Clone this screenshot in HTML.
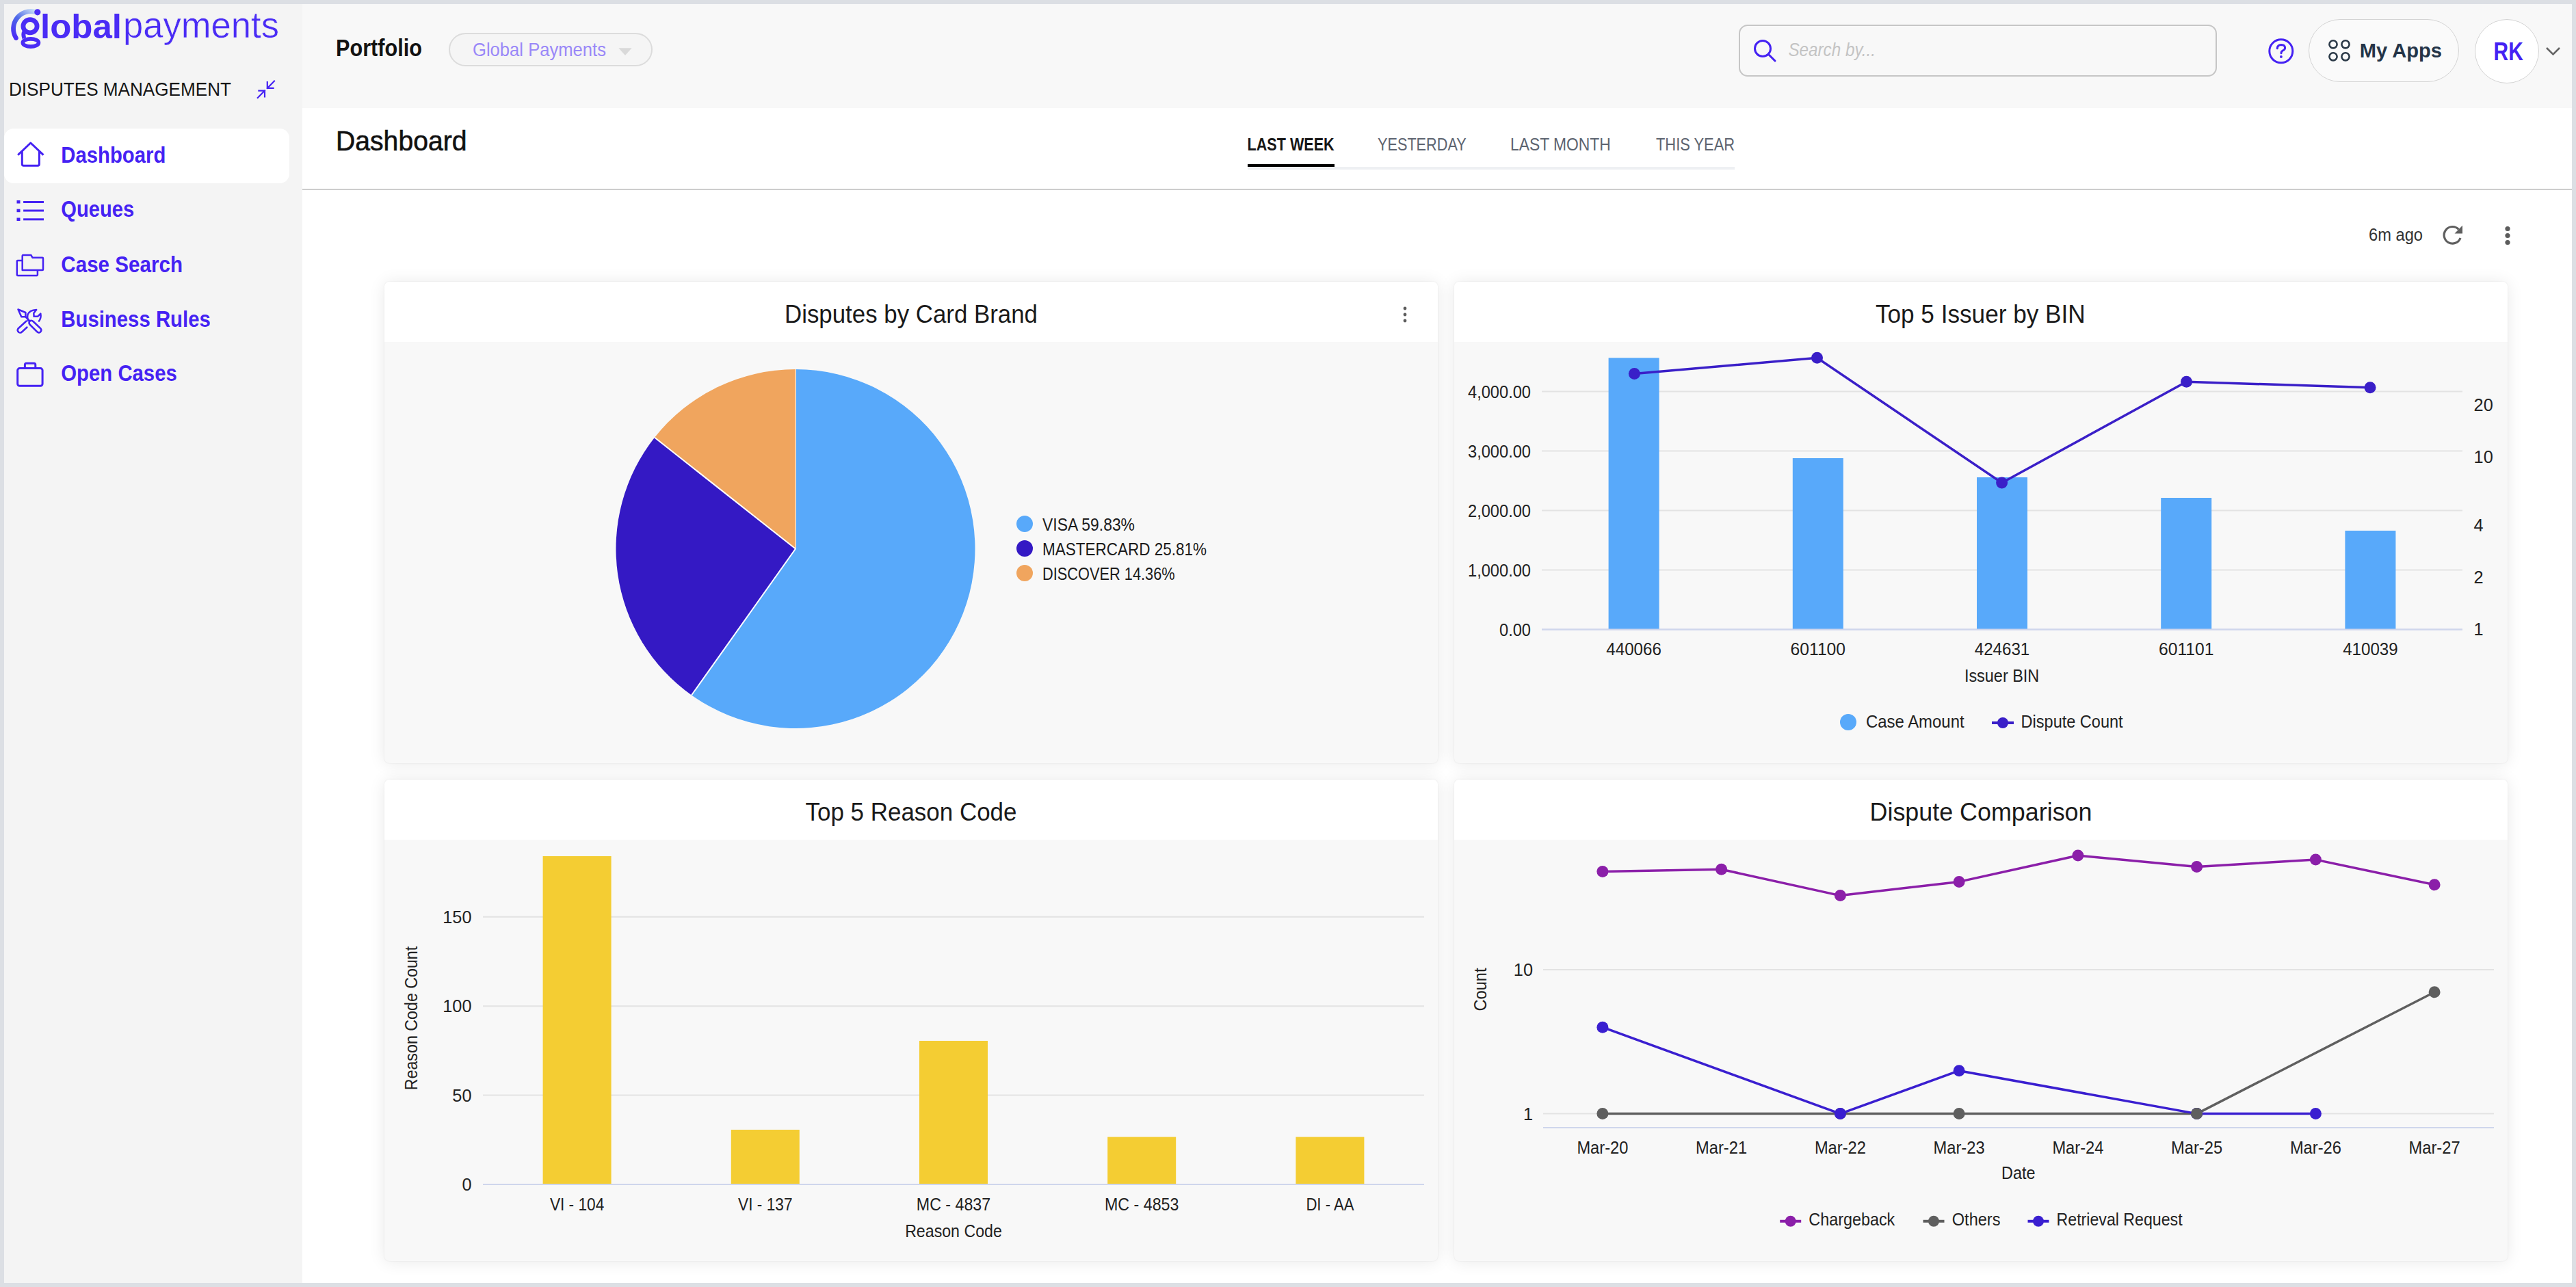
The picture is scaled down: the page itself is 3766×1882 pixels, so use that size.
<!DOCTYPE html>
<html><head><meta charset="utf-8"><style>
html,body{margin:0;padding:0;}
body{width:3766px;height:1882px;overflow:hidden;background:#dcdfe4;position:relative;font-family:"Liberation Sans", sans-serif;}
svg text{font-family:"Liberation Sans", sans-serif;}
</style></head><body>
<div style="position:absolute;left:6px;top:6px;width:436px;height:1870px;background:#f4f4f4"></div><div style="position:absolute;left:442px;top:6px;width:3318px;height:152px;background:#f8f8f8"></div><div style="position:absolute;left:442px;top:158px;width:3318px;height:1718px;background:#ffffff"></div><div style="position:absolute;left:442px;top:276px;width:3318px;height:2px;background:#cdcdcd"></div><div style="position:absolute;left:6px;top:188px;width:417px;height:80px;background:#ffffff;border-radius:14px"></div><div style="position:absolute;left:656px;top:48px;width:298px;height:49px;box-sizing:border-box;border:2px solid #dcdcdc;border-radius:25px;background:#f5f5f5"></div><div style="position:absolute;left:2542px;top:36px;width:699px;height:76px;box-sizing:border-box;border:2px solid #c6c6c6;border-radius:13px;background:#f8f8f8"></div><div style="position:absolute;left:3375px;top:28px;width:220px;height:92px;box-sizing:border-box;border:1.6px solid #d4d4d4;border-radius:46px;background:#fafafa"></div><div style="position:absolute;left:3618px;top:28px;width:94px;height:94px;box-sizing:border-box;border:1.6px solid #d4d4d4;border-radius:50%;background:#ffffff"></div><div style="position:absolute;left:1824px;top:244px;width:712px;height:4px;background:#eef0f3"></div><div style="position:absolute;left:1824px;top:240px;width:127px;height:4px;background:#000000"></div><div style="position:absolute;left:562px;top:412px;width:1540px;height:704px;background:#f8f8f8;border-radius:7px;box-shadow:0 0 2px rgba(0,0,0,0.09),0 1px 24px rgba(0,0,0,0.09);overflow:hidden"></div><div style="position:absolute;left:562px;top:412px;width:1540px;height:88px;background:#ffffff;border-radius:7px 7px 0 0"></div><div style="position:absolute;left:2126px;top:412px;width:1540px;height:704px;background:#f8f8f8;border-radius:7px;box-shadow:0 0 2px rgba(0,0,0,0.09),0 1px 24px rgba(0,0,0,0.09);overflow:hidden"></div><div style="position:absolute;left:2126px;top:412px;width:1540px;height:88px;background:#ffffff;border-radius:7px 7px 0 0"></div><div style="position:absolute;left:562px;top:1140px;width:1540px;height:704px;background:#f8f8f8;border-radius:7px;box-shadow:0 0 2px rgba(0,0,0,0.09),0 1px 24px rgba(0,0,0,0.09);overflow:hidden"></div><div style="position:absolute;left:562px;top:1140px;width:1540px;height:88px;background:#ffffff;border-radius:7px 7px 0 0"></div><div style="position:absolute;left:2126px;top:1140px;width:1540px;height:704px;background:#f8f8f8;border-radius:7px;box-shadow:0 0 2px rgba(0,0,0,0.09),0 1px 24px rgba(0,0,0,0.09);overflow:hidden"></div><div style="position:absolute;left:2126px;top:1140px;width:1540px;height:88px;background:#ffffff;border-radius:7px 7px 0 0"></div>
<svg width="3766" height="1882" viewBox="0 0 3766 1882" style="position:absolute;left:0;top:0">
<defs><linearGradient id="lg" gradientUnits="userSpaceOnUse" x1="22" y1="55" x2="52" y2="14"><stop offset="0" stop-color="#4a2cf5"/><stop offset="0.5" stop-color="#4f6ae8"/><stop offset="1" stop-color="#cfe6f6"/></linearGradient></defs><path d="M23.4,55.5 A25.5,25.5 0 0 1 51.6,17.4" stroke="url(#lg)" stroke-width="6.8" fill="none" stroke-linecap="round"/><circle cx="54.8" cy="17.8" r="4.6" fill="#4a2cf5"/><ellipse cx="44" cy="38.3" rx="10.1" ry="9.6" stroke="#4a2cf5" stroke-width="6.8" fill="none"/><path d="M36,45.5 Q33,50 35.5,56" stroke="#4a2cf5" stroke-width="6" fill="none"/><ellipse cx="44.9" cy="62.5" rx="11.6" ry="5.6" stroke="#4a2cf5" stroke-width="5.6" fill="none"/><text x="59" y="55.6" font-size="50" font-weight="700" fill="#4a2cf5" textLength="119" lengthAdjust="spacingAndGlyphs">lobal</text><text x="180" y="55.4" font-size="53" font-weight="400" fill="#4a2cf5" textLength="228" lengthAdjust="spacingAndGlyphs" stroke="#f4f4f4" stroke-width="0.5">payments</text>
<g stroke="#4522f3" stroke-width="2.2" fill="none" stroke-linecap="square"><path d="M401,118.6 L390.8,128.9 M390.8,120 L390.8,128.9 L399.6,128.9"/><path d="M376.8,142.9 L387,132.6 M378.4,132.6 L387,132.6 L387,141.3"/></g><g stroke="#4522f3" stroke-width="3" fill="none" stroke-linejoin="round"><path d="M26.2,226.7 L44.8,209 L63.5,226.7"/><path d="M32.3,221 L32.3,240 Q32.3,242.2 34.5,242.2 L55.2,242.2 Q57.4,242.2 57.4,240 L57.4,221"/></g><g fill="#4522f3"><rect x="24.5" y="293" width="5" height="4.5"/><rect x="24.5" y="305.7" width="5" height="4.5"/><rect x="24.5" y="318.5" width="5" height="4.5"/><rect x="34.1" y="294" width="29.9" height="3"/><rect x="34.1" y="306.5" width="29.9" height="3"/><rect x="34.1" y="319.3" width="29.9" height="3"/></g><g stroke="#4522f3" stroke-width="2.5" fill="none" stroke-linejoin="round"><path d="M32.7,395 L32.7,374 Q32.7,373 34,373 L45.3,373 L47.6,376.8 L62,376.8 Q63,376.8 63,378 L63,394 Q63,395 62,395 Z"/><path d="M32.7,381 L25.8,381 Q24.8,381 24.8,382 L24.8,402 Q24.8,402.9 25.8,402.9 L54,402.9 Q54.9,402.9 54.9,402 L54.9,395"/></g><g stroke="#4522f3" stroke-width="2.5" fill="none" stroke-linejoin="round" stroke-linecap="round"><path d="M26.5,452.5 L37.4,457 L37.4,463.3 L31.3,463.3 Z"/><path d="M37.4,463.3 L43.5,469.5"/><path d="M43.5,469.5 Q46,467.8 48.5,470 L59.5,480.5 Q61.5,483 59,485.5 Q56.5,487.5 54,485 L43.5,474.5 Q41.5,472 43.5,469.5 Z"/><path d="M38.5,469.5 L26.5,480.5 Q24.5,483.5 27.5,486 Q30,487.5 32.5,485 L39.5,478.5"/><path d="M41,469 Q39.5,464 40.5,460 Q43,453.5 53.2,453 L49.3,458 L49.6,462.8 L55,462.8 L59.3,458.6 Q60.5,465 57,469.5"/></g><g stroke="#4522f3" stroke-width="3" fill="none" stroke-linejoin="round"><rect x="25.7" y="538.6" width="36.4" height="25.7" rx="3"/><path d="M36.4,538.6 L36.4,533.5 Q36.4,531.3 38.6,531.3 L49.6,531.3 Q51.8,531.3 51.8,533.5 L51.8,538.6"/></g><g stroke="#4522f3" stroke-width="3" fill="none" stroke-linecap="round"><circle cx="2577" cy="71" r="11.5"/><path d="M2585.5,79.5 L2595,89"/></g><g stroke="#4522f3" stroke-width="3" fill="none" stroke-linecap="round"><circle cx="3334.8" cy="74.8" r="17"/><path d="M3329.3,70.8 Q3329.6,65.6 3335,65.6 Q3340.6,65.8 3340.6,70 Q3340.6,72.6 3337.5,73.9 Q3335,75 3335,77.8"/></g><circle cx="3334.9" cy="83" r="1.9" fill="#4522f3"/><circle cx="3411" cy="64.8" r="5.6" stroke="#2c3a48" stroke-width="2.6" fill="none"/><circle cx="3429" cy="64.8" r="5.6" stroke="#2c3a48" stroke-width="2.6" fill="none"/><circle cx="3411" cy="82.8" r="5.6" stroke="#2c3a48" stroke-width="2.6" fill="none"/><circle cx="3429" cy="82.8" r="5.6" stroke="#2c3a48" stroke-width="2.6" fill="none"/><path d="M3723,70 L3732.5,79.5 L3742,70" stroke="#666" stroke-width="2.6" fill="none"/><path d="M904.4,70.3 L923.6,70.3 L914,80.9 Z" fill="#d9d9d9"/><g stroke="#5f5f5f" stroke-width="3.2" fill="none"><path d="M3597,348 A12.3,12.3 0 1 1 3594.5,335.5"/></g><path d="M3600,329.7 L3600,341.5 L3588.5,341.5 Z" fill="#5f5f5f"/><circle cx="3666" cy="334.5" r="3.6" fill="#5c5c5c"/><circle cx="3666" cy="344.5" r="3.6" fill="#5c5c5c"/><circle cx="3666" cy="354.5" r="3.6" fill="#5c5c5c"/><circle cx="2054" cy="451" r="2.4" fill="#5c5c5c"/><circle cx="2054" cy="460" r="2.4" fill="#5c5c5c"/><circle cx="2054" cy="469" r="2.4" fill="#5c5c5c"/>
<text x="13" y="140" font-size="28.3" font-weight="400" font-style="normal" fill="#151515" text-anchor="start" textLength="325" lengthAdjust="spacingAndGlyphs" >DISPUTES MANAGEMENT</text><text x="89.3" y="238" font-size="33.9" font-weight="700" font-style="normal" fill="#4522f3" text-anchor="start" textLength="153" lengthAdjust="spacingAndGlyphs" >Dashboard</text><text x="89.3" y="317" font-size="33.9" font-weight="700" font-style="normal" fill="#4522f3" text-anchor="start" textLength="107" lengthAdjust="spacingAndGlyphs" >Queues</text><text x="89.3" y="398" font-size="33.9" font-weight="700" font-style="normal" fill="#4522f3" text-anchor="start" textLength="177.7" lengthAdjust="spacingAndGlyphs" >Case Search</text><text x="89.3" y="478" font-size="33.9" font-weight="700" font-style="normal" fill="#4522f3" text-anchor="start" textLength="218.5" lengthAdjust="spacingAndGlyphs" >Business Rules</text><text x="89.3" y="557" font-size="33.9" font-weight="700" font-style="normal" fill="#4522f3" text-anchor="start" textLength="169.5" lengthAdjust="spacingAndGlyphs" >Open Cases</text><text x="491" y="82" font-size="34.9" font-weight="700" font-style="normal" fill="#121212" text-anchor="start" textLength="126" lengthAdjust="spacingAndGlyphs" >Portfolio</text><text x="691" y="82" font-size="28.3" font-weight="400" font-style="normal" fill="#9a88f8" text-anchor="start" textLength="195" lengthAdjust="spacingAndGlyphs" >Global Payments</text><text x="2614.4" y="81.8" font-size="28" font-weight="400" font-style="italic" fill="#c4c4c4" text-anchor="start" textLength="127.6" lengthAdjust="spacingAndGlyphs" >Search by...</text><text x="3449.7" y="84" font-size="29" font-weight="700" font-style="normal" fill="#243447" text-anchor="start" textLength="120.3" lengthAdjust="spacingAndGlyphs" >My Apps</text><text x="3645.6" y="88.3" font-size="37.8" font-weight="700" font-style="normal" fill="#4522f3" text-anchor="start" textLength="43.2" lengthAdjust="spacingAndGlyphs" >RK</text><text x="491" y="219.6" font-size="41.4" font-weight="400" font-style="normal" fill="#111111" text-anchor="start" textLength="191.5" lengthAdjust="spacingAndGlyphs" stroke="#111111" stroke-width="0.6">Dashboard</text><text x="1823.6" y="220" font-size="26.2" font-weight="700" font-style="normal" fill="#161616" text-anchor="start" textLength="127" lengthAdjust="spacingAndGlyphs" >LAST WEEK</text><text x="2014" y="220" font-size="26.2" font-weight="400" font-style="normal" fill="#5d6470" text-anchor="start" textLength="129.7" lengthAdjust="spacingAndGlyphs" >YESTERDAY</text><text x="2208" y="220" font-size="26.2" font-weight="400" font-style="normal" fill="#5d6470" text-anchor="start" textLength="146.7" lengthAdjust="spacingAndGlyphs" >LAST MONTH</text><text x="2421" y="220" font-size="26.2" font-weight="400" font-style="normal" fill="#5d6470" text-anchor="start" textLength="115" lengthAdjust="spacingAndGlyphs" >THIS YEAR</text><text x="3463" y="351.8" font-size="25.4" font-weight="400" font-style="normal" fill="#333333" text-anchor="start" textLength="79" lengthAdjust="spacingAndGlyphs" >6m ago</text><text x="1332" y="471.6" font-size="37.8" font-weight="400" font-style="normal" fill="#1a1a1a" text-anchor="middle" textLength="370" lengthAdjust="spacingAndGlyphs" >Disputes by Card Brand</text><text x="2895.3" y="471.6" font-size="37.8" font-weight="400" font-style="normal" fill="#1a1a1a" text-anchor="middle" textLength="306.7" lengthAdjust="spacingAndGlyphs" >Top 5 Issuer by BIN</text><text x="1332" y="1199.6" font-size="37.8" font-weight="400" font-style="normal" fill="#1a1a1a" text-anchor="middle" textLength="309" lengthAdjust="spacingAndGlyphs" >Top 5 Reason Code</text><text x="2896" y="1199.6" font-size="37.8" font-weight="400" font-style="normal" fill="#1a1a1a" text-anchor="middle" textLength="325" lengthAdjust="spacingAndGlyphs" >Dispute Comparison</text><path d="M1163,802.5 L1163.00,540.00 A262.5,262.5 0 1 1 1010.98,1016.50 Z" fill="#58a9fa"/><line x1="1163" y1="802.5" x2="1163.00" y2="540.00" stroke="#ffffff" stroke-width="2"/><path d="M1163,802.5 L1010.98,1016.50 A262.5,262.5 0 0 1 957.01,639.79 Z" fill="#3419c4"/><line x1="1163" y1="802.5" x2="1010.98" y2="1016.50" stroke="#ffffff" stroke-width="2"/><path d="M1163,802.5 L957.01,639.79 A262.5,262.5 0 0 1 1163.00,540.00 Z" fill="#f0a55e"/><line x1="1163" y1="802.5" x2="957.01" y2="639.79" stroke="#ffffff" stroke-width="2"/><circle cx="1498" cy="766" r="12" fill="#58a9fa"/><text x="1524" y="775.5" font-size="26" font-weight="400" font-style="normal" fill="#1c1c1c" text-anchor="start" textLength="135" lengthAdjust="spacingAndGlyphs" >VISA 59.83%</text><circle cx="1498" cy="802" r="12" fill="#3419c4"/><text x="1524" y="811.5" font-size="26" font-weight="400" font-style="normal" fill="#1c1c1c" text-anchor="start" textLength="240" lengthAdjust="spacingAndGlyphs" >MASTERCARD 25.81%</text><circle cx="1498" cy="838" r="12" fill="#f0a55e"/><text x="1524" y="847.5" font-size="26" font-weight="400" font-style="normal" fill="#1c1c1c" text-anchor="start" textLength="193.7" lengthAdjust="spacingAndGlyphs" >DISCOVER 14.36%</text><line x1="2254" y1="920.5" x2="3600" y2="920.5" stroke="#cfd6ec" stroke-width="2"/><text x="2238" y="929.5" font-size="25.3" font-weight="400" font-style="normal" fill="#222222" text-anchor="end" textLength="46" lengthAdjust="spacingAndGlyphs" >0.00</text><line x1="2254" y1="833.5" x2="3600" y2="833.5" stroke="#e3e3e3" stroke-width="2"/><text x="2238" y="842.5" font-size="25.3" font-weight="400" font-style="normal" fill="#222222" text-anchor="end" textLength="92" lengthAdjust="spacingAndGlyphs" >1,000.00</text><line x1="2254" y1="746.5" x2="3600" y2="746.5" stroke="#e3e3e3" stroke-width="2"/><text x="2238" y="755.5" font-size="25.3" font-weight="400" font-style="normal" fill="#222222" text-anchor="end" textLength="92" lengthAdjust="spacingAndGlyphs" >2,000.00</text><line x1="2254" y1="659.5" x2="3600" y2="659.5" stroke="#e3e3e3" stroke-width="2"/><text x="2238" y="668.5" font-size="25.3" font-weight="400" font-style="normal" fill="#222222" text-anchor="end" textLength="92" lengthAdjust="spacingAndGlyphs" >3,000.00</text><line x1="2254" y1="572.5" x2="3600" y2="572.5" stroke="#e3e3e3" stroke-width="2"/><text x="2238" y="581.5" font-size="25.3" font-weight="400" font-style="normal" fill="#222222" text-anchor="end" textLength="92" lengthAdjust="spacingAndGlyphs" >4,000.00</text><text x="3616.6" y="600.8" font-size="25.3" font-weight="400" font-style="normal" fill="#222222" text-anchor="start" >20</text><text x="3616.6" y="676.8" font-size="25.3" font-weight="400" font-style="normal" fill="#222222" text-anchor="start" >10</text><text x="3616.6" y="777" font-size="25.3" font-weight="400" font-style="normal" fill="#222222" text-anchor="start" >4</text><text x="3616.6" y="852.6" font-size="25.3" font-weight="400" font-style="normal" fill="#222222" text-anchor="start" >2</text><text x="3616.6" y="928.6" font-size="25.3" font-weight="400" font-style="normal" fill="#222222" text-anchor="start" >1</text><rect x="2351.6" y="523.3" width="74" height="397.2" fill="#58a9fa"/><text x="2388.6" y="957.7" font-size="25.3" font-weight="400" font-style="normal" fill="#222222" text-anchor="middle" textLength="80.5" lengthAdjust="spacingAndGlyphs" >440066</text><rect x="2620.8" y="670" width="74" height="250.5" fill="#58a9fa"/><text x="2657.8" y="957.7" font-size="25.3" font-weight="400" font-style="normal" fill="#222222" text-anchor="middle" textLength="80.5" lengthAdjust="spacingAndGlyphs" >601100</text><rect x="2890.0" y="698" width="74" height="222.5" fill="#58a9fa"/><text x="2927.0" y="957.7" font-size="25.3" font-weight="400" font-style="normal" fill="#222222" text-anchor="middle" textLength="80.5" lengthAdjust="spacingAndGlyphs" >424631</text><rect x="3159.2" y="728" width="74" height="192.5" fill="#58a9fa"/><text x="3196.2" y="957.7" font-size="25.3" font-weight="400" font-style="normal" fill="#222222" text-anchor="middle" textLength="80.5" lengthAdjust="spacingAndGlyphs" >601101</text><rect x="3428.4" y="776" width="74" height="144.5" fill="#58a9fa"/><text x="3465.4" y="957.7" font-size="25.3" font-weight="400" font-style="normal" fill="#222222" text-anchor="middle" textLength="80.5" lengthAdjust="spacingAndGlyphs" >410039</text><line x1="2254" y1="920.5" x2="3600" y2="920.5" stroke="#cfd6ec" stroke-width="2"/><polyline points="2389.4,546.6 2656.5,523.3 2926.6,706 3196.5,558.3 3465,566.7" fill="none" stroke="#3a1fc8" stroke-width="3.5"/><circle cx="2389.4" cy="546.6" r="8.5" fill="#3a1fc8"/><circle cx="2656.5" cy="523.3" r="8.5" fill="#3a1fc8"/><circle cx="2926.6" cy="706" r="8.5" fill="#3a1fc8"/><circle cx="3196.5" cy="558.3" r="8.5" fill="#3a1fc8"/><circle cx="3465" cy="566.7" r="8.5" fill="#3a1fc8"/><text x="2926.6" y="996.5" font-size="25.3" font-weight="400" font-style="normal" fill="#222222" text-anchor="middle" textLength="109.4" lengthAdjust="spacingAndGlyphs" >Issuer BIN</text><circle cx="2702" cy="1056" r="12" fill="#58a9fa"/><text x="2728" y="1064" font-size="25.3" font-weight="400" font-style="normal" fill="#222222" text-anchor="start" textLength="143.6" lengthAdjust="spacingAndGlyphs" >Case Amount</text><line x1="2912" y1="1057" x2="2944" y2="1057" stroke="#3a1fc8" stroke-width="4"/><circle cx="2928" cy="1057" r="8" fill="#3a1fc8"/><text x="2954.6" y="1064" font-size="25.3" font-weight="400" font-style="normal" fill="#222222" text-anchor="start" textLength="149" lengthAdjust="spacingAndGlyphs" >Dispute Count</text><line x1="706" y1="1732.0" x2="2082" y2="1732.0" stroke="#cfd6ec" stroke-width="2"/><text x="689.5" y="1741.0" font-size="25.3" font-weight="400" font-style="normal" fill="#222222" text-anchor="end" >0</text><line x1="706" y1="1601.6" x2="2082" y2="1601.6" stroke="#e3e3e3" stroke-width="2"/><text x="689.5" y="1610.6" font-size="25.3" font-weight="400" font-style="normal" fill="#222222" text-anchor="end" >50</text><line x1="706" y1="1471.2" x2="2082" y2="1471.2" stroke="#e3e3e3" stroke-width="2"/><text x="689.5" y="1480.2" font-size="25.3" font-weight="400" font-style="normal" fill="#222222" text-anchor="end" >100</text><line x1="706" y1="1340.8" x2="2082" y2="1340.8" stroke="#e3e3e3" stroke-width="2"/><text x="689.5" y="1349.8" font-size="25.3" font-weight="400" font-style="normal" fill="#222222" text-anchor="end" >150</text><rect x="793.6" y="1252" width="100" height="480.0" fill="#f4cd33"/><text x="843.6" y="1770" font-size="25.3" font-weight="400" font-style="normal" fill="#222222" text-anchor="middle" textLength="79.4" lengthAdjust="spacingAndGlyphs" >VI - 104</text><rect x="1068.8" y="1652" width="100" height="80.0" fill="#f4cd33"/><text x="1118.8" y="1770" font-size="25.3" font-weight="400" font-style="normal" fill="#222222" text-anchor="middle" textLength="79.4" lengthAdjust="spacingAndGlyphs" >VI - 137</text><rect x="1344.0" y="1522" width="100" height="210.0" fill="#f4cd33"/><text x="1394.0" y="1770" font-size="25.3" font-weight="400" font-style="normal" fill="#222222" text-anchor="middle" textLength="108.4" lengthAdjust="spacingAndGlyphs" >MC - 4837</text><rect x="1619.2" y="1662.6" width="100" height="69.4" fill="#f4cd33"/><text x="1669.2" y="1770" font-size="25.3" font-weight="400" font-style="normal" fill="#222222" text-anchor="middle" textLength="108.4" lengthAdjust="spacingAndGlyphs" >MC - 4853</text><rect x="1894.4" y="1662.6" width="100" height="69.4" fill="#f4cd33"/><text x="1944.4" y="1770" font-size="25.3" font-weight="400" font-style="normal" fill="#222222" text-anchor="middle" textLength="70" lengthAdjust="spacingAndGlyphs" >DI - AA</text><line x1="706" y1="1732" x2="2082" y2="1732" stroke="#cfd6ec" stroke-width="2"/><text x="1394" y="1808.7" font-size="25.3" font-weight="400" font-style="normal" fill="#222222" text-anchor="middle" textLength="141.7" lengthAdjust="spacingAndGlyphs" >Reason Code</text><g transform="translate(609.5,1489) rotate(-90)"><text x="0" y="0" font-size="25.3" font-weight="400" font-style="normal" fill="#222222" text-anchor="middle" textLength="210.5" lengthAdjust="spacingAndGlyphs" >Reason Code Count</text></g><line x1="2256" y1="1418" x2="3646" y2="1418" stroke="#e3e3e3" stroke-width="2"/><line x1="2256" y1="1628.6" x2="3646" y2="1628.6" stroke="#e3e3e3" stroke-width="2"/><line x1="2256" y1="1649" x2="3646" y2="1649" stroke="#cfd6ec" stroke-width="2"/><text x="2241" y="1427" font-size="25.3" font-weight="400" font-style="normal" fill="#222222" text-anchor="end" >10</text><text x="2241" y="1637.6" font-size="25.3" font-weight="400" font-style="normal" fill="#222222" text-anchor="end" >1</text><text x="2342.9" y="1687" font-size="25.3" font-weight="400" font-style="normal" fill="#222222" text-anchor="middle" textLength="75" lengthAdjust="spacingAndGlyphs" >Mar-20</text><text x="2516.6" y="1687" font-size="25.3" font-weight="400" font-style="normal" fill="#222222" text-anchor="middle" textLength="75" lengthAdjust="spacingAndGlyphs" >Mar-21</text><text x="2690.4" y="1687" font-size="25.3" font-weight="400" font-style="normal" fill="#222222" text-anchor="middle" textLength="75" lengthAdjust="spacingAndGlyphs" >Mar-22</text><text x="2864.1" y="1687" font-size="25.3" font-weight="400" font-style="normal" fill="#222222" text-anchor="middle" textLength="75" lengthAdjust="spacingAndGlyphs" >Mar-23</text><text x="3037.9" y="1687" font-size="25.3" font-weight="400" font-style="normal" fill="#222222" text-anchor="middle" textLength="75" lengthAdjust="spacingAndGlyphs" >Mar-24</text><text x="3211.6" y="1687" font-size="25.3" font-weight="400" font-style="normal" fill="#222222" text-anchor="middle" textLength="75" lengthAdjust="spacingAndGlyphs" >Mar-25</text><text x="3385.4" y="1687" font-size="25.3" font-weight="400" font-style="normal" fill="#222222" text-anchor="middle" textLength="75" lengthAdjust="spacingAndGlyphs" >Mar-26</text><text x="3559.1" y="1687" font-size="25.3" font-weight="400" font-style="normal" fill="#222222" text-anchor="middle" textLength="75" lengthAdjust="spacingAndGlyphs" >Mar-27</text><text x="2950.7" y="1724" font-size="25.3" font-weight="400" font-style="normal" fill="#222222" text-anchor="middle" textLength="49.4" lengthAdjust="spacingAndGlyphs" >Date</text><g transform="translate(2172.5,1447) rotate(-90)"><text x="0" y="0" font-size="25.3" font-weight="400" font-style="normal" fill="#222222" text-anchor="middle" textLength="63" lengthAdjust="spacingAndGlyphs" >Count</text></g><polyline points="2342.9,1274.6 2516.6,1271.3 2690.4,1309.6 2864.1,1289.4 3037.9,1251 3211.6,1267.5 3385.4,1257.1 3559.1,1293.8" fill="none" stroke="#8b1fa9" stroke-width="3.5" stroke-linejoin="round"/><circle cx="2342.9" cy="1274.6" r="8.5" fill="#8b1fa9"/><circle cx="2516.6" cy="1271.3" r="8.5" fill="#8b1fa9"/><circle cx="2690.4" cy="1309.6" r="8.5" fill="#8b1fa9"/><circle cx="2864.1" cy="1289.4" r="8.5" fill="#8b1fa9"/><circle cx="3037.9" cy="1251" r="8.5" fill="#8b1fa9"/><circle cx="3211.6" cy="1267.5" r="8.5" fill="#8b1fa9"/><circle cx="3385.4" cy="1257.1" r="8.5" fill="#8b1fa9"/><circle cx="3559.1" cy="1293.8" r="8.5" fill="#8b1fa9"/><polyline points="2342.9,1628.6 2690.4,1628.6 2864.1,1628.6 3211.6,1628.6 3559.1,1450.8" fill="none" stroke="#5f5f5f" stroke-width="3.5" stroke-linejoin="round"/><circle cx="2342.9" cy="1628.6" r="8.5" fill="#5f5f5f"/><circle cx="2690.4" cy="1628.6" r="8.5" fill="#5f5f5f"/><circle cx="2864.1" cy="1628.6" r="8.5" fill="#5f5f5f"/><circle cx="3211.6" cy="1628.6" r="8.5" fill="#5f5f5f"/><circle cx="3559.1" cy="1450.8" r="8.5" fill="#5f5f5f"/><polyline points="2342.9,1502.2 2690.4,1628.6 2864.1,1565.7 3211.6,1628.6 3385.4,1628.6" fill="none" stroke="#3a1fd0" stroke-width="3.5" stroke-linejoin="round"/><circle cx="2342.9" cy="1502.2" r="8.5" fill="#3a1fd0"/><circle cx="2690.4" cy="1628.6" r="8.5" fill="#3a1fd0"/><circle cx="2864.1" cy="1565.7" r="8.5" fill="#3a1fd0"/><circle cx="3211.6" cy="1628.6" r="8.5" fill="#3a1fd0"/><circle cx="3385.4" cy="1628.6" r="8.5" fill="#3a1fd0"/><circle cx="3211.6" cy="1628.6" r="8.5" fill="#5f5f5f"/><line x1="2602.2" y1="1785.8" x2="2633.2" y2="1785.8" stroke="#8b1fa9" stroke-width="4"/><circle cx="2617.7" cy="1785.8" r="8" fill="#8b1fa9"/><text x="2644.3" y="1791.5" font-size="25.3" font-weight="400" font-style="normal" fill="#222222" text-anchor="start" textLength="126" lengthAdjust="spacingAndGlyphs" >Chargeback</text><line x1="2811.5" y1="1785.8" x2="2842.5" y2="1785.8" stroke="#5f5f5f" stroke-width="4"/><circle cx="2827" cy="1785.8" r="8" fill="#5f5f5f"/><text x="2853.8" y="1791.5" font-size="25.3" font-weight="400" font-style="normal" fill="#222222" text-anchor="start" textLength="70.7" lengthAdjust="spacingAndGlyphs" >Others</text><line x1="2964.5" y1="1785.8" x2="2995.5" y2="1785.8" stroke="#3a1fd0" stroke-width="4"/><circle cx="2980" cy="1785.8" r="8" fill="#3a1fd0"/><text x="3006.6" y="1791.5" font-size="25.3" font-weight="400" font-style="normal" fill="#222222" text-anchor="start" textLength="184" lengthAdjust="spacingAndGlyphs" >Retrieval Request</text>
</svg>
</body></html>
